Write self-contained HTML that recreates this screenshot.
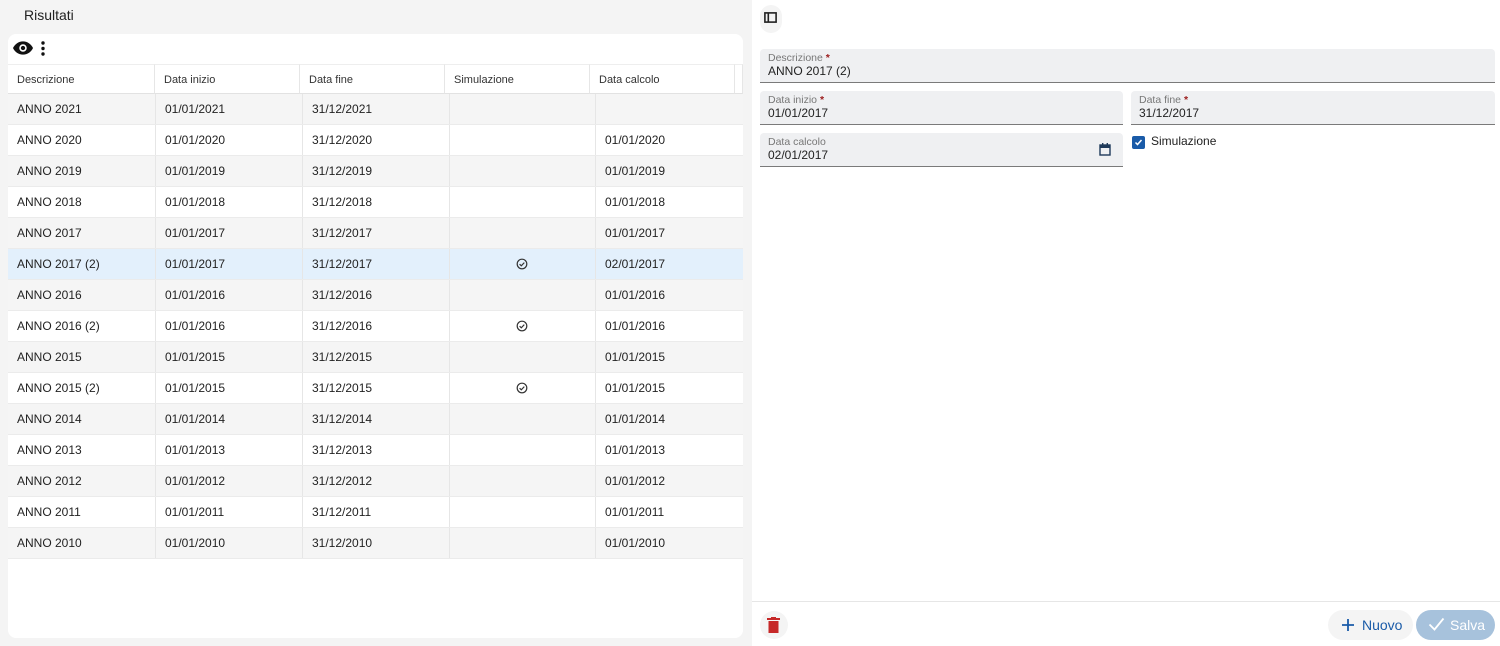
<!DOCTYPE html>
<html><head><meta charset="utf-8"><style>
*{box-sizing:border-box;margin:0;padding:0}
body{width:1500px;height:646px;overflow:hidden;background:#f4f4f4;font-family:"Liberation Sans",Roboto,sans-serif;color:#222;position:relative}
.a{position:absolute}
.card{left:8px;top:34px;width:735px;height:604px;background:#fff;border-radius:8px;overflow:hidden}
.hd{position:absolute;top:30px;height:30px;font-size:11px;color:#333;line-height:30px;padding-left:9px;border-right:1px solid #e6e6e6;border-bottom:1px solid #e2e2e2;border-top:1px solid #eee}
.row{position:absolute;left:0;width:735px;height:31px;border-bottom:1px solid #ebebeb;font-size:12px;line-height:30px}
.row div{position:absolute;top:0;height:30px;border-right:1px solid #e6e6e6}
.row span{position:absolute;top:0}
.g{background:#f5f5f5}.w{background:#fff}.s{background:#e3f0fc}
.f{position:absolute;background:#eff0f2;border-bottom:1px solid #7a7a7a;border-radius:4px 4px 0 0}
.f .l{position:absolute;left:8px;top:3px;font-size:10.5px;color:#777}
.f .l b{color:#9b1c1c;font-weight:bold}
.f .v{position:absolute;left:8px;top:15px;font-size:12px;color:#222}
</style></head><body>
<div class="a" style="left:24px;top:7px;font-size:14px;color:#222">Risultati</div>
<div class="a card">
<svg class="a" style="left:5px;top:7px" width="20" height="14" viewBox="0 0 24 16"><path d="M12 0C6.5 0 2 3.6 0 8c2 4.4 6.5 8 12 8s10-3.6 12-8C22 3.6 17.5 0 12 0z" fill="#111"/><circle cx="12" cy="8" r="4.5" fill="#fff"/><circle cx="12" cy="8" r="2.6" fill="#111"/></svg>
<svg class="a" style="left:33px;top:7px" width="4" height="15"><circle cx="2" cy="2" r="1.7" fill="#111"/><circle cx="2" cy="7.5" r="1.7" fill="#111"/><circle cx="2" cy="13" r="1.7" fill="#111"/></svg>
<div class="hd" style="left:0;width:147px">Descrizione</div>
<div class="hd" style="left:147px;width:145px">Data inizio</div>
<div class="hd" style="left:292px;width:145px">Data fine</div>
<div class="hd" style="left:437px;width:145px">Simulazione</div>
<div class="hd" style="left:582px;width:145px">Data calcolo</div>
<div class="hd" style="left:727px;width:8px;padding:0"></div>
<div id="rows"></div>
</div>
<div class="a" style="left:752px;top:0;width:748px;height:646px;background:#fff"></div>
<div class="a" style="left:760px;top:5px;width:22px;height:28px;border-radius:11px;background:#f4f4f4"></div>
<svg class="a" style="left:764px;top:12px" width="13" height="11" viewBox="0 0 13 11"><rect x="0.9" y="0.9" width="11.2" height="9.2" fill="none" stroke="#222" stroke-width="1.6"/><rect x="3.5" y="1" width="1.6" height="9" fill="#222"/></svg>
<div class="f" style="left:760px;top:49px;width:735px;height:34px"><div class="l">Descrizione <b>*</b></div><div class="v">ANNO 2017 (2)</div></div>
<div class="f" style="left:760px;top:91px;width:363px;height:34px"><div class="l">Data inizio <b>*</b></div><div class="v">01/01/2017</div></div>
<div class="f" style="left:1131px;top:91px;width:364px;height:34px"><div class="l">Data fine <b>*</b></div><div class="v">31/12/2017</div></div>
<div class="f" style="left:760px;top:133px;width:363px;height:34px"><div class="l">Data calcolo</div><div class="v">02/01/2017</div>
<svg class="a" style="left:339px;top:10px" width="12" height="13" viewBox="0 0 12 13"><rect x="1" y="2" width="10" height="10" fill="none" stroke="#1f3a5a" stroke-width="1.4"/><rect x="1" y="2" width="10" height="3" fill="#1f3a5a"/><rect x="3" y="0" width="1.4" height="3" fill="#1f3a5a"/><rect x="7.6" y="0" width="1.4" height="3" fill="#1f3a5a"/></svg></div>
<div class="a" style="left:1132px;top:136px;width:13px;height:13px;background:#1a5ba8;border-radius:2px"></div>
<svg class="a" style="left:1134px;top:138px" width="9" height="9"><path d="M1.5 4.5l2 2 4-4.5" stroke="#fff" stroke-width="1.5" fill="none"/></svg>
<div class="a" style="left:1151px;top:134px;font-size:12px;color:#222">Simulazione</div>
<div class="a" style="left:752px;top:601px;width:748px;height:1px;background:#e6e6e6"></div>
<div class="a" style="left:760px;top:611px;width:28px;height:28px;border-radius:14px;background:#f4f4f4"></div>
<svg class="a" style="left:767px;top:617px" width="13" height="16" viewBox="0 0 13 16"><rect x="0" y="1" width="13" height="2" fill="#c62828"/><rect x="4" y="0" width="5" height="2" fill="#c62828"/><rect x="1.5" y="4" width="10" height="12" fill="#c62828"/></svg>
<div class="a" style="left:1328px;top:610px;width:85px;height:30px;border-radius:15px;background:#f4f4f4"></div>
<svg class="a" style="left:1341px;top:618px" width="14" height="14"><path d="M7 1v12M1 7h12" stroke="#1a5ba8" stroke-width="1.8"/></svg>
<div class="a" style="left:1362px;top:617px;font-size:14px;color:#1a5ba8">Nuovo</div>
<div class="a" style="left:1416px;top:610px;width:79px;height:30px;border-radius:15px;background:#a7c2dc"></div>
<svg class="a" style="left:1428px;top:617px" width="17" height="14"><path d="M1.5 7.5l5 5 9-11" stroke="#fff" stroke-width="1.8" fill="none"/></svg>
<div class="a" style="left:1450px;top:617px;font-size:14px;color:#fff">Salva</div>
<script>
var d=[["ANNO 2021","01/01/2021","31/12/2021","",""],["ANNO 2020","01/01/2020","31/12/2020","","01/01/2020"],["ANNO 2019","01/01/2019","31/12/2019","","01/01/2019"],["ANNO 2018","01/01/2018","31/12/2018","","01/01/2018"],["ANNO 2017","01/01/2017","31/12/2017","","01/01/2017"],["ANNO 2017 (2)","01/01/2017","31/12/2017","1","02/01/2017"],["ANNO 2016","01/01/2016","31/12/2016","","01/01/2016"],["ANNO 2016 (2)","01/01/2016","31/12/2016","1","01/01/2016"],["ANNO 2015","01/01/2015","31/12/2015","","01/01/2015"],["ANNO 2015 (2)","01/01/2015","31/12/2015","1","01/01/2015"],["ANNO 2014","01/01/2014","31/12/2014","","01/01/2014"],["ANNO 2013","01/01/2013","31/12/2013","","01/01/2013"],["ANNO 2012","01/01/2012","31/12/2012","","01/01/2012"],["ANNO 2011","01/01/2011","31/12/2011","","01/01/2011"],["ANNO 2010","01/01/2010","31/12/2010","","01/01/2010"]];
var h="";var ck='<svg style="position:absolute;left:66px;top:9px" width="12" height="12"><circle cx="6" cy="6" r="4.8" fill="none" stroke="#333" stroke-width="1.2"/><path d="M3.6 6.2l1.7 1.6 3-3.2" stroke="#333" stroke-width="1.2" fill="none"/></svg>';
d.forEach(function(r,i){var c=i==5?"s":(i%2==0?"g":"w");h+='<div class="row '+c+'" style="top:'+(60+i*31)+'px"><div style="left:0;width:148px"></div><div style="left:148px;width:147px"></div><div style="left:295px;width:147px"></div><div style="left:442px;width:146px">'+(r[3]?ck:'')+'</div><span style="left:9px">'+r[0]+'</span><span style="left:157px">'+r[1]+'</span><span style="left:304px">'+r[2]+'</span><span style="left:597px">'+r[4]+'</span></div>'});
document.getElementById("rows").innerHTML=h;
</script>
</body></html>
